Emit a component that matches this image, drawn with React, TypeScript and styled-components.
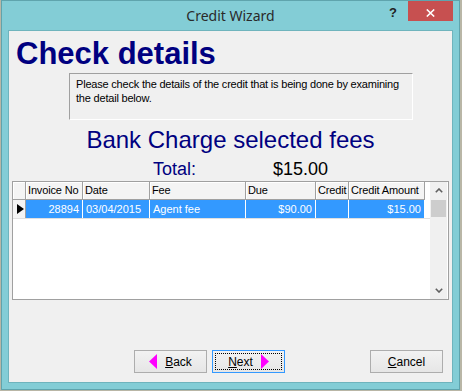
import React from 'react';
import styled, { createGlobalStyle } from 'styled-components';

const Global = createGlobalStyle`
  html, body { margin: 0; padding: 0; background: #b9b6a6; }
  body { font-family: "Liberation Sans", Arial, sans-serif; }
  * { box-sizing: border-box; }
`;

const Window = styled.div`
  margin-left: 1px;
  width: 459px;
  height: 390px;
  background: #83cdd6;
  border: 1px solid #5fa4ad;
  display: flex;
  flex-direction: column;
`;

const TitleBar = styled.div`
  height: 29px;
  flex: none;
  display: grid;
  grid-template-columns: 1fr auto 1fr;
`;

const Title = styled.div`
  grid-column: 2;
  align-self: center;
  font-family: "Noto Sans", "Open Sans", sans-serif;
  font-size: 14px;
  color: #2a2a2a;
  line-height: 20px;
  padding-top: 1px;
`;

const Controls = styled.div`
  grid-column: 3;
  justify-self: end;
  align-self: start;
  display: flex;
  align-items: center;
  height: 20px;
  margin-right: 6px;
`;

const Help = styled.span`
  font-family: "Liberation Sans", Arial, sans-serif;
  font-weight: bold;
  font-size: 13px;
  color: #222;
  margin-right: 11px;
  padding-top: 2px;
`;

const CloseBtn = styled.div`
  width: 45px;
  height: 20px;
  background: #c75050;
  display: flex;
  align-items: center;
  justify-content: center;
  padding-top: 3px;
`;

const Client = styled.div`
  flex: 1;
  margin: 0 6px 6px 6px;
  background: #f0f0f0;
  border: 1px solid #6fb4bd;
  display: flex;
  flex-direction: column;
`;

const Heading = styled.h1`
  margin: 7px 0 0 7px;
  font-family: "Liberation Sans", Arial, sans-serif;
  font-weight: bold;
  font-size: 31px;
  line-height: 31px;
  color: #000080;
`;

const Description = styled.div`
  margin: 4px 0 0 60px;
  width: 344px;
  height: 47px;
  border-top: 1px solid #a0a0a0;
  border-left: 1px solid #a0a0a0;
  border-bottom: 1px solid #ffffff;
  border-right: 1px solid #ffffff;
  padding: 3px 6px;
  font-size: 11px;
  letter-spacing: -0.2px;
  line-height: 14px;
  color: #000;
  white-space: nowrap;
`;

const SubHeading = styled.div`
  margin-top: 8px;
  text-align: center;
  font-size: 24px;
  line-height: 23px;
  color: #000080;
`;

const TotalRow = styled.div`
  margin-top: 9px;
  display: grid;
  grid-template-columns: 120px auto;
  padding-left: 144px;
  font-size: 18px;
  line-height: 18px;
`;

const TotalLabel = styled.span`
  color: #000080;
`;

const TotalValue = styled.span`
  color: #000;
`;

const GridBox = styled.div`
  margin: 3px 0 0 3px;
  width: 437px;
  height: 119px;
  border: 1px solid #a0a0a0;
  background: #fff;
  display: flex;
`;

const Table = styled.div`
  width: 417px;
  display: flex;
  flex-direction: column;
`;

const COLS = '13px 57px 67px 96px 70px 33px 76px';

const HeaderRow = styled.div`
  display: grid;
  grid-template-columns: ${COLS};
  height: 18px;
`;

const HeaderCell = styled.div`
  background: #f4f4f4;
  border-right: 1px solid #a0a0a0;
  border-bottom: 1px solid #a0a0a0;
  box-shadow: inset 1px 1px 0 #ffffff;
  font-size: 11px;
  letter-spacing: -0.15px;
  line-height: 17px;
  padding-left: 2px;
  color: #000;
  white-space: nowrap;
  overflow: hidden;
`;

const DataRow = styled.div`
  display: grid;
  grid-template-columns: ${COLS};
  height: 19px;
  border-bottom: 1px solid #e0e0e0;
`;

const Indicator = styled.div`
  background: #f4f4f4;
  border-right: 1px solid #a0a0a0;
  display: flex;
  align-items: center;
  padding-left: 4px;
`;

const Arrow = styled.div`
  width: 0;
  height: 0;
  border-left: 7px solid #000;
  border-top: 5.5px solid transparent;
  border-bottom: 5.5px solid transparent;
`;

const DataCell = styled.div<{ $right?: boolean }>`
  background: #3399ff;
  color: #fff;
  border-right: 1px solid #fff;
  font-size: 11px;
  line-height: 18px;
  padding: 0 3px;
  text-align: ${(p) => (p.$right ? 'right' : 'left')};
  white-space: nowrap;
  overflow: hidden;
`;

const ScrollBar = styled.div`
  width: 17px;
  margin-left: auto;
  margin-right: 1px;
  background: #f0f0f0;
  display: flex;
  flex-direction: column;
`;

const ScrollBtn = styled.div`
  height: 17px;
  display: flex;
  align-items: center;
  justify-content: center;
`;

const Thumb = styled.div`
  height: 17px;
  margin: 1px 1px 0 1px;
  background: #cdcdcd;
`;

const Track = styled.div`
  flex: 1;
`;

const ButtonBar = styled.div`
  margin-top: auto;
  display: flex;
  gap: 5px;
  padding: 0 9px 9px 125px;
`;

const Button = styled.div<{ $focused?: boolean; $push?: boolean }>`
  position: relative;
  width: 73px;
  height: 23px;
  border: 1px solid ${(p) => (p.$focused ? '#3399ff' : '#adadad')};
  background: linear-gradient(#f2f2f2, #e6e6e6);
  display: flex;
  align-items: center;
  justify-content: center;
  gap: 8px;
  font-size: 12px;
  color: #000;
  margin-left: ${(p) => (p.$push ? 'auto' : '0')};
  &::after {
    content: '';
    display: ${(p) => (p.$focused ? 'block' : 'none')};
    position: absolute;
    inset: 2px;
    border: 1px dotted #000;
  }
`;

const Label = styled.span`
  line-height: 14px;
`;

const Chevron = ({ up }: { up?: boolean }) => (
  <svg width="8" height="5" viewBox="0 0 8 5">
    <polyline
      points={up ? '0.8,4.3 4,1 7.2,4.3' : '0.8,0.7 4,4 7.2,0.7'}
      fill="none"
      stroke="#606060"
      strokeWidth="1.6"
    />
  </svg>
);

const Tri = ({ left }: { left?: boolean }) => (
  <svg width="8" height="15" viewBox="0 0 8 15">
    <polygon points={left ? '8,0 0,7.5 8,15' : '0,0 8,7.5 0,15'} fill="#ff00ff" />
  </svg>
);

export default function App() {
  return (
    <>
      <Global />
      <Window>
        <TitleBar>
          <Title>Credit Wizard</Title>
          <Controls>
            <Help>?</Help>
            <CloseBtn>
              <svg width="9" height="8" viewBox="0 0 9 8">
                <path d="M0.8 0.5 L8.2 7.5 M8.2 0.5 L0.8 7.5" stroke="#fff" strokeWidth="1.6" />
              </svg>
            </CloseBtn>
          </Controls>
        </TitleBar>
        <Client>
          <Heading>Check details</Heading>
          <Description>
            Please check the details of the credit that is being done by examining
            <br />
            the detail below.
          </Description>
          <SubHeading>Bank Charge selected fees</SubHeading>
          <TotalRow>
            <TotalLabel>Total:</TotalLabel>
            <TotalValue>$15.00</TotalValue>
          </TotalRow>
          <GridBox>
            <Table>
              <HeaderRow>
                <HeaderCell />
                <HeaderCell>Invoice No</HeaderCell>
                <HeaderCell>Date</HeaderCell>
                <HeaderCell>Fee</HeaderCell>
                <HeaderCell>Due</HeaderCell>
                <HeaderCell>Credit</HeaderCell>
                <HeaderCell>Credit Amount</HeaderCell>
              </HeaderRow>
              <DataRow>
                <Indicator>
                  <Arrow />
                </Indicator>
                <DataCell $right>28894</DataCell>
                <DataCell>03/04/2015</DataCell>
                <DataCell>Agent fee</DataCell>
                <DataCell $right>$90.00</DataCell>
                <DataCell />
                <DataCell $right>$15.00</DataCell>
              </DataRow>
            </Table>
            <ScrollBar>
              <ScrollBtn>
                <Chevron up />
              </ScrollBtn>
              <Thumb />
              <Track />
              <ScrollBtn>
                <Chevron />
              </ScrollBtn>
            </ScrollBar>
          </GridBox>
          <ButtonBar>
            <Button>
              <Tri left />
              <Label>
                <u>B</u>ack
              </Label>
            </Button>
            <Button $focused>
              <Label>
                <u>N</u>ext
              </Label>
              <Tri />
            </Button>
            <Button $push>
              <Label>
                <u>C</u>ancel
              </Label>
            </Button>
          </ButtonBar>
        </Client>
      </Window>
    </>
  );
}
